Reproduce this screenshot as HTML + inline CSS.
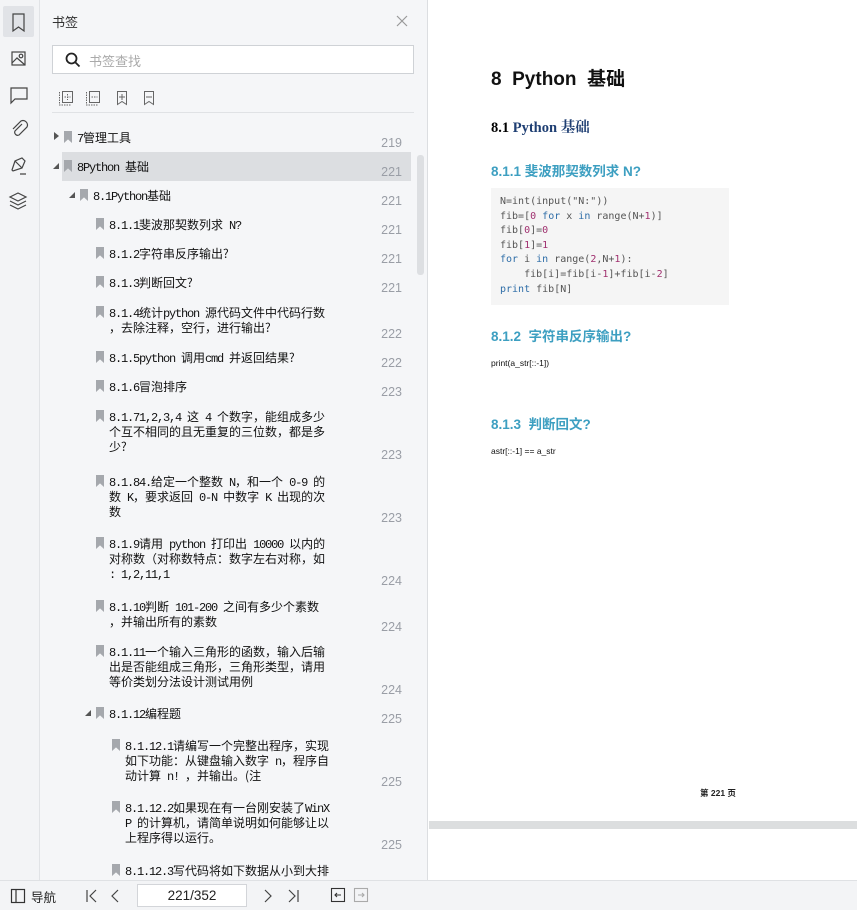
<!DOCTYPE html>
<html><head><meta charset="utf-8"><style>
*{margin:0;padding:0;box-sizing:border-box}
body{width:857px;height:910px;overflow:hidden;background:#fff;font-family:"Liberation Sans","Noto Sans CJK SC",sans-serif;position:relative}
.abs{position:absolute}
#rail{left:0;top:0;width:40px;height:880px;background:#f3f4f6;border-right:1px solid #e1e3e6}
#panel{left:40px;top:0;width:388px;height:880px;background:#f5f6f8;border-right:1px solid #dcdee1}
.t{position:absolute;font-family:"Noto Sans CJK SC",sans-serif;font-size:12px;line-height:15px;color:#111;white-space:nowrap}
.t i{font-style:normal;font-family:"Liberation Mono",monospace;font-size:12px;letter-spacing:-1.2px;line-height:0}
.p{position:absolute;right:25px;font-size:12.5px;color:#9a9ea6;font-family:"Liberation Sans",sans-serif}
.bm{position:absolute;width:8px;height:12px;background:#a5a8ad;clip-path:polygon(0 0,100% 0,100% 100%,50% 70%,0 100%)}
.arr{position:absolute;width:0;height:0}
#view{left:429px;top:0;width:428px;height:880px;background:#fff}
#bar{left:0;top:880px;width:857px;height:30px;background:#f3f4f6;border-top:1px solid #dfe1e4}
.code{font-family:"DejaVu Sans Mono","Liberation Mono",monospace;font-size:10px;line-height:14.6px;color:#555}
.k{color:#2f6ea8}.n{color:#a0306f}
.h3{color:#3d9fc1;font-weight:bold;font-size:13.5px;font-family:"Liberation Sans","Noto Sans CJK SC",sans-serif}
</style></head><body>
<div id="rail" class="abs">
 <div class="abs" style="left:3px;top:6px;width:31px;height:31px;background:#e1e3e7;border-radius:2px"></div>
 <svg class="abs" style="left:0;top:0" width="40" height="220" fill="none" stroke="#444" stroke-width="1.2">
  <path d="M13 14h11v17l-5.5-4-5.5 4z"/>
  <rect x="12" y="52" width="13" height="13"/><path d="M12 63l5-5 8 7"/><circle cx="21" cy="56" r="1.8"/>
  <path d="M11 88h16v11H15l-4 4z"/>
  <path d="M22 124l-7 7a3 3 0 0 0 4 4l8-8a4.5 4.5 0 0 0-6-6l-8 8"/>
  <path d="M12 170l3-9 7-3 3 3-3 7-9 3zM15 161l7 7M20 174h6"/>
  <path d="M18 193l8 4-8 4-8-4zM10 201l8 4 8-4M10 205l8 4 8-4"/>
 </svg>
</div>
<div id="panel" class="abs">
 <div class="abs" style="left:12px;top:12px;font-size:13px;color:#333">书签</div>
 <svg class="abs" style="left:356px;top:15px" width="12" height="12" stroke="#999" stroke-width="1.2"><path d="M1 1l10 10M11 1L1 11"/></svg>
 <div class="abs" style="left:12px;top:45px;width:362px;height:29px;background:#fff;border:1px solid #cfd2d6"></div>
 <svg class="abs" style="left:25px;top:52px" width="16" height="16" fill="none" stroke="#222" stroke-width="1.8"><circle cx="6.5" cy="6.5" r="5"/><path d="M10.5 10.5l4 4"/></svg>
 <div class="abs" style="left:49px;top:51px;font-size:13px;color:#aaa">书签查找</div>
 <svg class="abs" style="left:18px;top:90px" width="120" height="16" fill="none" stroke="#666" stroke-width="1">
  <rect x="4.5" y="1.5" width="10" height="11"/><path d="M9.5 4v6M6.5 7h6M1.5 2v13h12" stroke-dasharray="1.5 1"/>
  <rect x="31.5" y="1.5" width="10" height="11"/><path d="M33.5 7h6M28.5 2v13h12" stroke-dasharray="1.5 1"/>
  <path d="M59.5 1.5h9v13l-4.5-3-4.5 3zM64 4v6M61 7h6"/>
  <path d="M86.5 1.5h9v13l-4.5-3-4.5 3zM88 7h6"/>
 </svg>
 <div class="abs" style="left:12px;top:112px;width:362px;height:1px;background:#e0e2e5"></div>
 <div class="abs" style="left:22px;top:152px;width:349px;height:29px;background:#dcdee1"></div>
 <div class="abs" style="left:377px;top:155px;width:7px;height:120px;background:#dddfe2;border-radius:3px"></div>

 <div class="arr" style="left:14px;top:132px;border-left:5px solid #555;border-top:4px solid transparent;border-bottom:4px solid transparent"></div>
 <div class="bm" style="left:24px;top:131px"></div><div class="t" style="left:37px;top:130px"><i>7</i>管理工具</div><div class="p" style="top:136px">219</div>
 <div class="arr" style="left:13px;top:163px;border-right:6px solid #555;border-top:6px solid transparent"></div>
 <div class="bm" style="left:24px;top:160px"></div><div class="t" style="left:37px;top:159px"><i>8Python </i>基础</div><div class="p" style="top:165px">221</div>
 <div class="arr" style="left:29px;top:192px;border-right:6px solid #555;border-top:6px solid transparent"></div>
 <div class="bm" style="left:40px;top:189px"></div><div class="t" style="left:53px;top:188px"><i>8.1Python</i>基础</div><div class="p" style="top:194px">221</div>

 <div class="bm" style="left:56px;top:218px"></div><div class="t" style="left:69px;top:217px"><i>8.1.1</i>斐波那契数列求<i> N?</i></div><div class="p" style="top:223px">221</div>
 <div class="bm" style="left:56px;top:247px"></div><div class="t" style="left:69px;top:246px"><i>8.1.2</i>字符串反序输出?</div><div class="p" style="top:252px">221</div>
 <div class="bm" style="left:56px;top:276px"></div><div class="t" style="left:69px;top:275px"><i>8.1.3</i>判断回文?</div><div class="p" style="top:281px">221</div>
 <div class="bm" style="left:56px;top:306px"></div><div class="t" style="left:69px;top:305px"><i>8.1.4</i>统计<i>python </i>源代码文件中代码行数<br>，去除注释，空行，进行输出?</div><div class="p" style="top:327px">222</div>
 <div class="bm" style="left:56px;top:351px"></div><div class="t" style="left:69px;top:350px"><i>8.1.5python </i>调用<i>cmd </i>并返回结果?</div><div class="p" style="top:356px">222</div>
 <div class="bm" style="left:56px;top:380px"></div><div class="t" style="left:69px;top:379px"><i>8.1.6</i>冒泡排序</div><div class="p" style="top:385px">223</div>
 <div class="bm" style="left:56px;top:410px"></div><div class="t" style="left:69px;top:409px"><i>8.1.71,2,3,4 </i>这<i> 4 </i>个数字，能组成多少<br>个互不相同的且无重复的三位数，都是多<br>少?</div><div class="p" style="top:448px">223</div>
 <div class="bm" style="left:56px;top:475px"></div><div class="t" style="left:69px;top:474px"><i>8.1.84.</i>给定一个整数<i> N</i>，和一个<i> 0-9 </i>的<br>数<i> K</i>，要求返回<i> 0-N </i>中数字<i> K </i>出现的次<br>数</div><div class="p" style="top:511px">223</div>
 <div class="bm" style="left:56px;top:537px"></div><div class="t" style="left:69px;top:536px"><i>8.1.9</i>请用<i> python </i>打印出<i> 10000 </i>以内的<br>对称数（对称数特点：数字左右对称，如<br><i>: 1,2,11,1</i></div><div class="p" style="top:574px">224</div>
 <div class="bm" style="left:56px;top:600px"></div><div class="t" style="left:69px;top:599px"><i>8.1.10</i>判断<i> 101-200 </i>之间有多少个素数<br>，并输出所有的素数</div><div class="p" style="top:620px">224</div>
 <div class="bm" style="left:56px;top:645px"></div><div class="t" style="left:69px;top:644px"><i>8.1.11</i>一个输入三角形的函数，输入后输<br>出是否能组成三角形，三角形类型，请用<br>等价类划分法设计测试用例</div><div class="p" style="top:683px">224</div>
 <div class="arr" style="left:45px;top:710px;border-right:6px solid #555;border-top:6px solid transparent"></div>
 <div class="bm" style="left:56px;top:707px"></div><div class="t" style="left:69px;top:706px"><i>8.1.12</i>编程题</div><div class="p" style="top:712px">225</div>
 <div class="bm" style="left:72px;top:739px"></div><div class="t" style="left:85px;top:738px"><i>8.1.12.1</i>请编写一个完整出程序，实现<br>如下功能：从键盘输入数字<i> n</i>，程序自<br>动计算<i> n! </i>，并输出。(注</div><div class="p" style="top:775px">225</div>
 <div class="bm" style="left:72px;top:801px"></div><div class="t" style="left:85px;top:800px"><i>8.1.12.2</i>如果现在有一台刚安装了<i>WinX</i><br><i>P </i>的计算机，请简单说明如何能够让以<br>上程序得以运行。</div><div class="p" style="top:838px">225</div>
 <div class="bm" style="left:72px;top:864px"></div><div class="t" style="left:85px;top:863px"><i>8.1.12.3</i>写代码将如下数据从小到大排</div>
</div>

<div id="view" class="abs">
 <div class="abs" style="left:0;top:821px;width:428px;height:8px;background:#dcdedf"></div>
 <div class="abs" style="left:62px;top:64px;font-size:19px;font-weight:bold;color:#111">8&nbsp; Python&nbsp; 基础</div>
 <div class="abs" style="left:62px;top:116px;font-size:14.5px;font-weight:bold;font-family:'Liberation Serif','Noto Serif CJK SC',serif;color:#000">8.1 <span style="color:#1f3f73">Python 基础</span></div>
 <div class="abs h3" style="left:62px;top:160px">8.1.1 斐波那契数列求 N?</div>
 <div class="abs" style="left:62px;top:188px;width:238px;height:117px;background:#f5f5f5"></div>
 <div class="abs code" style="left:71px;top:195px;white-space:pre">N=int(input("N:"))
fib=[<span class="n">0</span> <span class="k">for</span> x <span class="k">in</span> range(N+<span class="n">1</span>)]
fib[<span class="n">0</span>]=<span class="n">0</span>
fib[<span class="n">1</span>]=<span class="n">1</span>
<span class="k">for</span> i <span class="k">in</span> range(<span class="n">2</span>,N+<span class="n">1</span>):
    fib[i]=fib[i-<span class="n">1</span>]+fib[i-<span class="n">2</span>]
<span class="k">print</span> fib[N]</div>
 <div class="abs h3" style="left:62px;top:325px">8.1.2&nbsp; 字符串反序输出?</div>
 <div class="abs" style="left:62px;top:358px;font-size:8.5px;color:#111">print(a_str[::-1])</div>
 <div class="abs h3" style="left:62px;top:413px">8.1.3&nbsp; 判断回文?</div>
 <div class="abs" style="left:62px;top:446px;font-size:8.5px;color:#111">astr[::-1] == a_str</div>
 <div class="abs" style="left:271px;top:787px;font-size:8.5px;font-weight:bold;color:#222">第 221 页</div>
</div>

<div id="bar" class="abs">
 <svg class="abs" style="left:10px;top:7px" width="16" height="16" fill="none" stroke="#333" stroke-width="1.2"><rect x="1.5" y="1.5" width="13" height="13"/><path d="M6 2v12"/></svg>
 <div class="abs" style="left:31px;top:6px;font-size:12.5px;color:#222">导航</div>
 <svg class="abs" style="left:84px;top:6px" width="220" height="18" fill="none" stroke="#444" stroke-width="1.2">
  <path d="M3 3v12M12 3L6 9l6 6M34 3l-6 6 6 6"/>
  <path d="M181 3l6 6-6 6M205 3l6 6-6 6M214 3v12"/>
 </svg>
 <div class="abs" style="left:137px;top:3px;width:110px;height:23px;background:#fff;border:1px solid #d3d5d9;text-align:center;font-size:13.5px;line-height:22px;color:#222">221/352</div>
 <svg class="abs" style="left:330px;top:6px" width="42" height="18" fill="none" stroke-width="1.1">
  <rect x="1.5" y="1.5" width="13" height="13" stroke="#333"/><path d="M11 8H5M7 6L5 8l2 2" stroke="#333"/>
  <rect x="24.5" y="1.5" width="13" height="13" stroke="#aaa"/><path d="M28 8h6M32 6l2 2-2 2" stroke="#aaa"/>
 </svg>
</div>
</body></html>
